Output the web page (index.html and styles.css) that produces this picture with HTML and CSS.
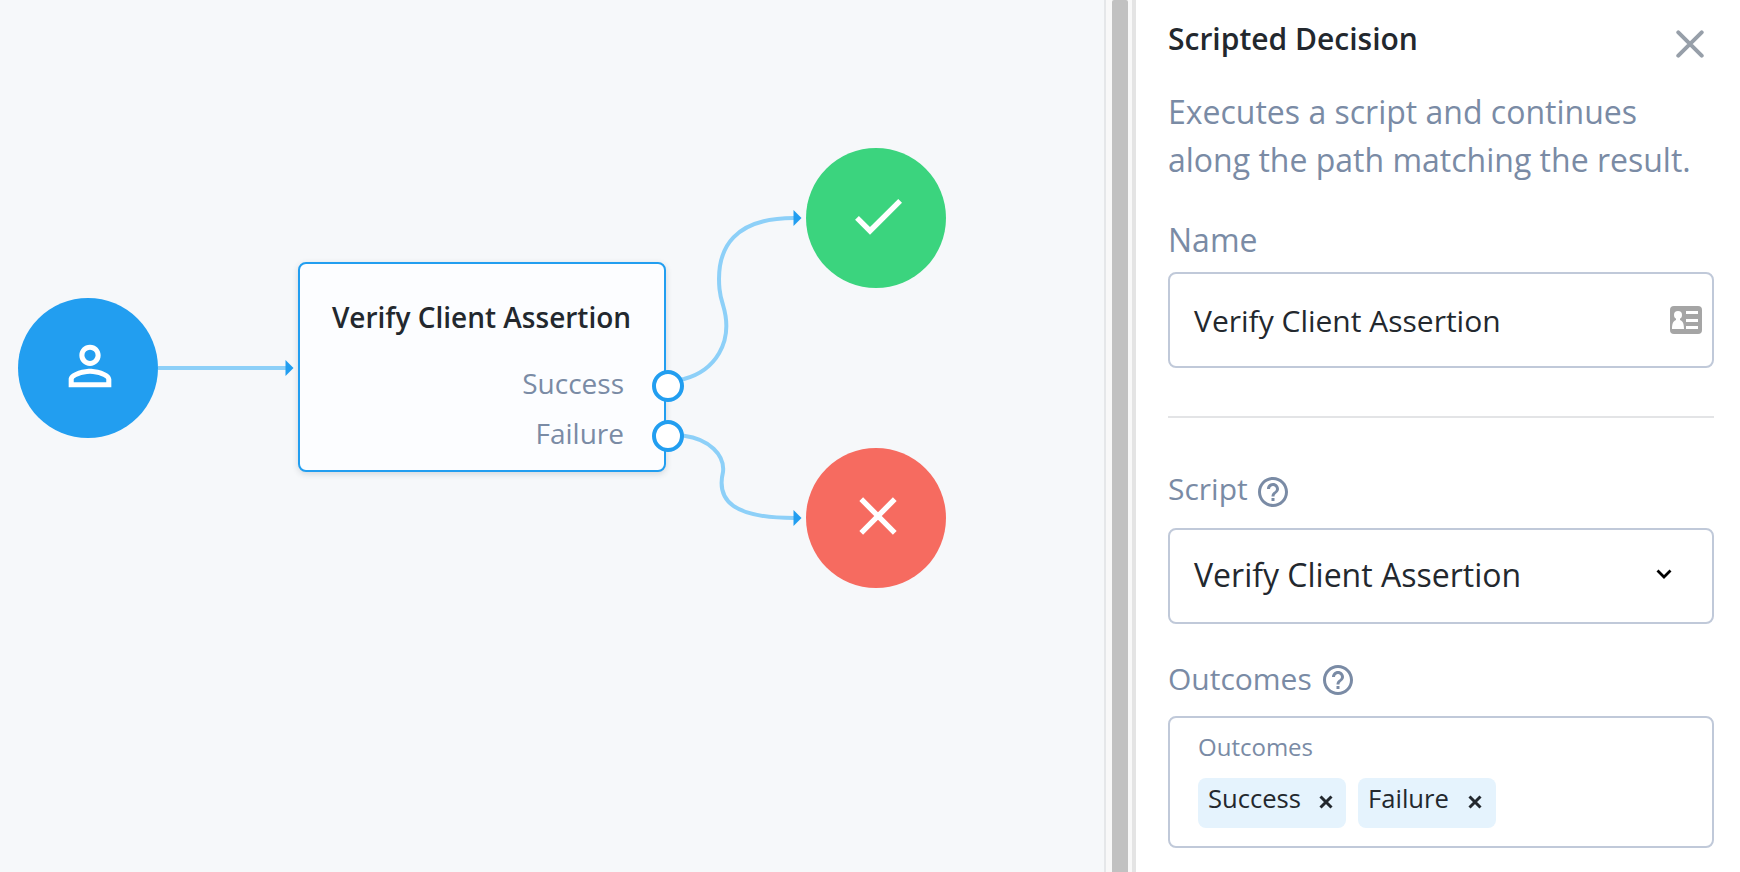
FILE: index.html
```
<!DOCTYPE html>
<html lang="en">
<head>
<meta charset="utf-8">
<title>Scripted Decision</title>
<link rel="stylesheet" href="styles.css">
</head>
<body>
<div class="app">
  <main class="canvas">
    <svg class="links" width="1104" height="872" viewBox="0 0 1104 872">
      <g class="link-line">
        <path d="M158 368H286"/>
        <path d="M668 382C675 381 679 380 684 379C714 371 734.500 343 723 305C721 299 720 294 719.500 289C715.500 246 736 218 794 218"/>
        <path d="M668 434C673 434 679 435 684 435.700C709 439 725 455 723 472C716 501 734 518 794 518"/>
      </g>
      <g class="link-arrow">
        <path d="M285.500 360L293.500 368L285.500 376Z"/>
        <path d="M793.500 210L801.500 218L793.500 226Z"/>
        <path d="M793.500 510L801.500 518L793.500 526Z"/>
      </g>
    </svg>
    <div class="node node-start">
      <svg width="64" height="64" viewBox="0 0 24 24"><path fill="#fff" d="M12 5.900a2.100 2.100 0 1 1 0 4.200 2.100 2.100 0 0 1 0-4.200m0 9c2.970 0 6.100 1.460 6.100 2.100v1.100H5.900V17c0-.640 3.130-2.100 6.100-2.100M12 4C9.790 4 8 5.790 8 8s1.790 4 4 4 4-1.790 4-4-1.790-4-4-4zm0 9c-2.670 0-8 1.340-8 4v3h16v-3c0-2.660-5.330-4-8-4z"/></svg>
    </div>
    <section class="node-card">
      <h2 class="node-title">Verify Client Assertion</h2>
      <div class="outcome">Success<span class="port"></span></div>
      <div class="outcome">Failure<span class="port"></span></div>
    </section>
    <div class="node node-success">
      <svg width="64" height="64" viewBox="0 0 24 24"><path fill="#fff" d="M9 16.170L4.830 12l-1.420 1.410L9 19 21 7l-1.410-1.410z"/></svg>
    </div>
    <div class="node node-failure">
      <svg width="64" height="64" viewBox="0 0 24 24"><path fill="#fff" d="M19 6.410L17.590 5 12 10.590 6.410 5 5 6.410 10.590 12 5 17.590 6.410 19 12 13.410 17.590 19 19 17.590 13.410 12z"/></svg>
    </div>
  </main>
  <div class="scrollbar"><div class="thumb"></div></div>
  <aside class="panel">
    <header class="panel-head">
      <h1 class="panel-title">Scripted Decision</h1>
      <svg class="close" width="28" height="28" viewBox="0 0 28 28"><path d="M2.300 2.300L25.700 25.700M25.700 2.300L2.300 25.700"/></svg>
    </header>
    <p class="description">Executes a script and continues along the path matching the result.</p>
    <div class="label label-name">Name</div>
    <div class="field field-name">
      <span>Verify Client Assertion</span>
      <svg width="32" height="28" viewBox="0 0 32 28">
        <rect width="32" height="28" rx="4" fill="#a5a5a5"/>
        <circle cx="8" cy="9" r="4" fill="#fff"/>
        <path fill="#fff" d="M6 11h4v3c3 1 4 4 4 9H2c0-5 1-8 4-9zM16 5h12v3H16zM16 13h12v3H16zM16 20h12v3H16z"/>
      </svg>
    </div>
    <hr class="divider">
    <div class="label label-script">Script
      <svg class="help" width="36" height="36" viewBox="0 0 24 24"><path d="M11 18h2v-2h-2v2zm1-16C6.480 2 2 6.480 2 12s4.480 10 10 10 10-4.480 10-10S17.520 2 12 2zm0 18c-4.410 0-8-3.590-8-8s3.590-8 8-8 8 3.590 8 8-3.590 8-8 8zm0-14c-2.210 0-4 1.790-4 4h2c0-1.100.9-2 2-2s2 .9 2 2c0 2-3 1.750-3 5h2c0-2.250 3-2.500 3-5 0-2.210-1.790-4-4-4z"/></svg>
    </div>
    <div class="field field-script">
      <span>Verify Client Assertion</span>
      <svg width="16" height="11" viewBox="0 0 16 11"><path d="M1.500 1.500L8 8L14.500 1.500" fill="none" stroke="#000" stroke-width="2.800"/></svg>
    </div>
    <div class="label label-outcomes">Outcomes
      <svg class="help" width="36" height="36" viewBox="0 0 24 24"><path d="M11 18h2v-2h-2v2zm1-16C6.480 2 2 6.480 2 12s4.480 10 10 10 10-4.480 10-10S17.520 2 12 2zm0 18c-4.410 0-8-3.590-8-8s3.590-8 8-8 8 3.590 8 8-3.590 8-8 8zm0-14c-2.210 0-4 1.790-4 4h2c0-1.100.9-2 2-2s2 .9 2 2c0 2-3 1.750-3 5h2c0-2.250 3-2.500 3-5 0-2.210-1.790-4-4-4z"/></svg>
    </div>
    <div class="tag-field">
      <div class="tag-label">Outcomes</div>
      <div class="tags">
        <div class="tag tag-success">Success<svg width="14" height="14" viewBox="0 0 14 14"><path d="M1.500 1.500L12.500 12.500M12.500 1.500L1.500 12.500"/></svg></div>
        <div class="tag tag-failure">Failure<svg width="14" height="14" viewBox="0 0 14 14"><path d="M1.500 1.500L12.500 12.500M12.500 1.500L1.500 12.500"/></svg></div>
      </div>
    </div>
  </aside>
</div>
</body>
</html>
```
FILE: styles.css
```
* { box-sizing: border-box; }
body {
  margin: 0;
  font-family: "Open Sans", sans-serif;
  color: #23282e;
  background: #fff;
}
h1, h2, p { margin: 0; }
svg { display: block; flex: none; }
.app { display: flex; width: 1740px; height: 872px; overflow: hidden; }

/* Flow canvas */
.canvas { position: relative; width: 1104px; flex: none; background: #f6f8fa; }
.links { position: absolute; left: 0; top: 0; }
.link-line { fill: none; stroke: #8dd0f8; stroke-width: 4; }
.link-arrow { fill: #229ef0; }
.node {
  position: absolute;
  width: 140px;
  height: 140px;
  border-radius: 50%;
  display: flex;
  align-items: center;
  justify-content: center;
  padding: 0 0 4px 4px;
}
.node-start { left: 18px; top: 298px; background: #229ef0; }
.node-success { left: 806px; top: 148px; background: #3bd47e; }
.node-failure { left: 806px; top: 448px; background: #f66b60; }
.node-card {
  position: absolute;
  left: 298px;
  top: 262px;
  width: 368px;
  height: 210px;
  border: 2px solid #229ef0;
  border-radius: 8px;
  background: #fcfdff;
  box-shadow: 0 2px 6px rgba(40, 50, 60, .16);
  padding-top: 28px;
}
.node-title {
  font-size: 28px;
  line-height: 50px;
  font-weight: 600;
  text-align: center;
  padding-right: 1px;
  margin-bottom: 16px;
}
.outcome {
  position: relative;
  font-size: 28px;
  line-height: 50px;
  color: #7a8ba5;
  text-align: right;
  padding-right: 40px;
}
.port {
  position: absolute;
  right: -20px;
  top: 12px;
  width: 32px;
  height: 32px;
  border: 4px solid #229ef0;
  border-radius: 50%;
  background: #fff;
}

/* Scrollbar between canvas and panel */
.scrollbar {
  width: 32px;
  flex: none;
  background: #f8f8f8;
  border-left: 2px solid #e5e7e9;
  border-right: 4px solid #e4e4e4;
  padding: 0 4px 0 6px;
}
.thumb { height: 100%; background: #c1c1c1; border-radius: 2px 2px 0 0; }

/* Details panel */
.panel { flex: 1; padding: 17px 26px 0 32px; }
.panel-head { display: flex; justify-content: space-between; height: 68px; }
.panel-title { font-size: 30px; line-height: 44px; font-weight: 600; white-space: nowrap; }
.close { margin: 13px 10px 0 0; }
.close path { stroke: #979fa9; stroke-width: 4; stroke-linecap: round; }
.description { font-size: 32px; line-height: 48px; color: #7a8ba5; margin-top: 3px; width: 546px; }
.label { display: flex; align-items: center; color: #7a8ba5; line-height: 48px; font-size: 30px; }
.label-name { margin-top: 32px; height: 56px; padding-bottom: 8px; font-size: 32px; }
.field {
  display: flex;
  align-items: center;
  justify-content: space-between;
  height: 96px;
  border: 2px solid #c0c9d9;
  border-radius: 8px;
  padding: 0 10px 0 24px;
  white-space: nowrap;
}
.field-name { font-size: 30px; }
.field-script { font-size: 32px; padding: 0 40px 4px 24px; }
.divider { border: 0; height: 2px; background: #e3e4e6; margin: 48px 0 0; }
.label-script { height: 48px; margin: 47px 0 15px; }
.label-script .help { margin: 6px 0 0 7px; }
.label-outcomes { height: 48px; margin: 31px 0 13px; }
.help { fill: #7a8ba5; margin: 2px 0 0 8px; }
.tag-field {
  height: 132px;
  border: 2px solid #c0c9d9;
  border-radius: 8px;
  padding: 13px 28px;
}
.tag-label { font-size: 24px; line-height: 32px; color: #7a8ba5; margin-bottom: 15px; }
.tags { display: flex; gap: 12px; }
.tag {
  display: flex;
  justify-content: space-between;
  height: 50px;
  border-radius: 8px;
  background: #e5f3fd;
  font-size: 25.6px;
  line-height: 42px;
  padding: 0 13px 0 10px;
}
.tag svg { margin-top: 17px; }
.tag path { stroke: #23282e; stroke-width: 3; }
.tag-success { width: 148px; }
.tag-failure { width: 138px; padding-right: 14px; }
```
